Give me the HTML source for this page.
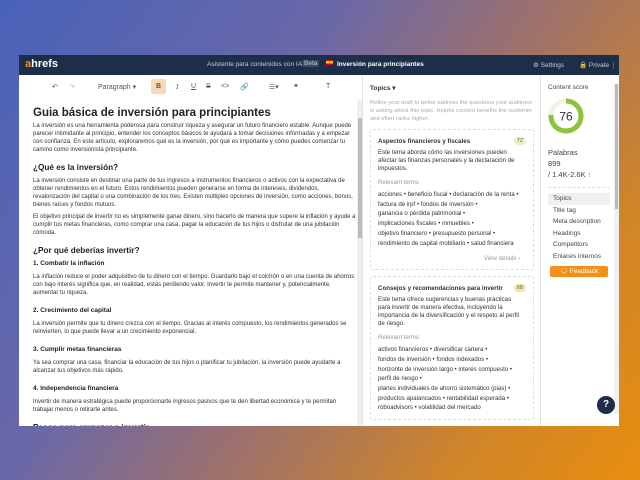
<!DOCTYPE html>
<html><head><meta charset="utf-8"><style>
*{box-sizing:border-box;margin:0;padding:0}
body{width:640px;height:480px;overflow:hidden;font-family:"Liberation Sans",sans-serif;background:linear-gradient(125deg,#4862b8 0%,#6a68a8 35%,#9a7070 55%,#d08528 80%,#e88e10 100%);position:relative}
.win{position:absolute;left:19px;top:55px;width:600px;height:371px;background:#fff;overflow:hidden}
.hdr{height:20px;background:#1c2e48;color:#c5ccd6;font-size:6.5px;position:relative}
.hdr span{position:absolute;top:6px}
.logo{left:6px;top:3px!important;font-size:11px;font-weight:bold;color:#fff}
.logo b{color:#f28c1e}
.tb{position:absolute;left:0;top:20px;width:338px;height:24px;font-size:7px;color:#555}
.tb span{position:absolute;top:8px}
.ed{position:absolute;left:14px;top:51px;width:324px;color:#333;font-size:6px;line-height:8px}
.ed h1{font-size:11.5px;line-height:14px;color:#222;margin-bottom:2px}
.ed h2{font-size:8.2px;line-height:10px;color:#222;margin:9px 0 4px}
.ed h3{font-size:6.5px;line-height:8px;color:#222;margin:10px 0 5px}
.ed h2+h3{margin-top:4px}
.ed p{margin-bottom:4px}
.sb1{position:absolute;left:338px;top:45px;width:6px;height:326px;background:#f0f0f0}
.sb1 i{position:absolute;left:1px;top:18px;width:4px;height:120px;background:#bbb}
.vl{position:absolute;left:343px;top:20px;width:1px;height:351px;background:#e2e2e2}
.tp{position:absolute;left:351px;top:20px;width:164px;font-size:5.8px;color:#333}
.card{border:1px dashed #ddd;border-radius:3px;padding:8px 13px 6px 7px;margin-top:6px;line-height:8px;position:relative;font-size:6.1px}
.card h4{font-size:6.2px;margin-bottom:3px}
.badge{position:absolute;right:7px;top:7px;background:#e9efc8;border-radius:5px;padding:0 3px;font-size:5.5px;color:#666}
.rt{color:#999;margin:6px 0 3px}
.rp{position:absolute;left:521px;top:20px;width:79px;height:351px;border-left:1px solid #e2e2e2;font-size:6.5px;color:#444}
.nav div{padding:2px 5px;height:11.5px;white-space:nowrap}
</style></head><body>
<div class="win">
 <div class="hdr">
  <span class="logo"><b>a</b>hrefs</span>
  <span style="left:188px">Asistente para contenidos con IA</span>
  <span style="left:283px;background:#3a4a60;padding:0 2px;border-radius:2px;top:5px">Beta</span>
  <span style="left:307px;top:5px;width:7px;height:5px;background:linear-gradient(#c60b1e 25%,#ffc400 25%,#ffc400 75%,#c60b1e 75%)"></span>
  <span style="left:318px;color:#fff;font-weight:bold">Inversión para principiantes</span>
  <span style="left:514px">⚙ Settings</span>
  <span style="left:560px">🔒 Private</span>
  <span style="left:591px">⋮</span>
 </div>
 <div class="tb">
  <span style="left:33px">↶</span><span style="left:50px;color:#bbb">↷</span>
  <span style="left:79px">Paragraph ▾</span>
  <span style="left:132px;top:4px;width:15px;height:15px;background:#fbd9b5;border-radius:2px"></span>
  <span style="left:137px;font-weight:bold">B</span>
  <span style="left:157px;font-style:italic;font-family:'Liberation Serif'">I</span>
  <span style="left:172px;text-decoration:underline">U</span>
  <span style="left:187px;text-decoration:line-through">S</span>
  <span style="left:202px">&lt;&gt;</span><span style="left:221px">🔗</span>
  <span style="left:250px">☰▾</span><span style="left:275px;font-weight:bold">❝</span><span style="left:307px">T</span>
 </div>
 <div class="ed">
  <h1>Guia básica de inversión para principiantes</h1>
  <p>La inversión es una herramienta poderosa para construir riqueza y asegurar un futuro financiero estable. Aunque puede parecer intimidante al principio, entender los conceptos básicos te ayudará a tomar decisiones informadas y a empezar con confianza. En este artículo, exploraremos qué es la inversión, por qué es importante y cómo puedes comenzar tu camino como inversionista principiante.</p>
  <h2>¿Qué es la inversión?</h2>
  <p>La inversión consiste en destinar una parte de tus ingresos a instrumentos financieros o activos con la expectativa de obtener rendimientos en el futuro. Estos rendimientos pueden generarse en forma de intereses, dividendos, revalorización del capital o una combinación de los tres. Existen múltiples opciones de inversión, como acciones, bonos, bienes raíces y fondos mutuos.</p>
  <p>El objetivo principal de invertir no es simplemente ganar dinero, sino hacerlo de manera que supere la inflación y ayude a cumplir tus metas financieras, como comprar una casa, pagar la educación de tus hijos o disfrutar de una jubilación cómoda.</p>
  <h2>¿Por qué deberías invertir?</h2>
  <h3>1. Combatir la inflación</h3>
  <p>La inflación reduce el poder adquisitivo de tu dinero con el tiempo. Guardarlo bajo el colchón o en una cuenta de ahorros con bajo interés significa que, en realidad, estás perdiendo valor. Invertir te permite mantener y, potencialmente, aumentar tu riqueza.</p>
  <h3>2. Crecimiento del capital</h3>
  <p>La inversión permite que tu dinero crezca con el tiempo. Gracias al interés compuesto, los rendimientos generados se reinvierten, lo que puede llevar a un crecimiento exponencial.</p>
  <h3>3. Cumplir metas financieras</h3>
  <p>Ya sea comprar una casa, financiar la educación de tus hijos o planificar tu jubilación, la inversión puede ayudarte a alcanzar tus objetivos más rápido.</p>
  <h3>4. Independencia financiera</h3>
  <p>Invertir de manera estratégica puede proporcionarte ingresos pasivos que te den libertad económica y te permitan trabajar menos o retirarte antes.</p>
  <h2>Pasos para empezar a invertir</h2>
 </div>
 <div class="sb1"><i></i></div>
 <div class="vl"></div>
 <div class="tp">
  <div style="font-weight:bold;font-size:6.5px;margin-top:9px">Topics ▾</div>
  <div style="color:#aaa;line-height:8px;margin-top:7px">Refine your draft to better address the questions your audience is asking about this topic. Helpful content benefits the customer and often ranks higher.</div>
  <div class="card"><h4>Aspectos financieros y fiscales</h4><span class="badge">72</span>
   Este tema aborda cómo las inversiones pueden afectar las finanzas personales y la declaración de impuestos.
   <div class="rt">Relevant terms</div>
   <div style="line-height:9.7px">acciones • beneficio fiscal • declaración de la renta •<br>factura de irpf • fondos de inversión •<br>ganancia o pérdida patrimonial •<br>implicaciones fiscales • inmuebles •<br>objetivo financiero • presupuesto personal •<br>rendimiento de capital mobiliario • salud financiera</div>
   <div style="text-align:right;color:#999;margin-top:7px">View details ›</div>
  </div>
  <div class="card"><h4>Consejos y recomendaciones para invertir</h4><span class="badge" style="background:#eee7a8">68</span>
   Este tema ofrece sugerencias y buenas prácticas para invertir de manera efectiva, incluyendo la importancia de la diversificación y el respeto al perfil de riesgo.
   <div class="rt">Relevant terms</div>
   <div style="line-height:9.7px">activos financieros • diversificar cartera •<br>fondos de inversión • fondos indexados •<br>horizonte de inversión largo • interés compuesto •<br>perfil de riesgo •<br>planes individuales de ahorro sistemático (pias) •<br>productos apalancados • rentabilidad esperada •<br>roboadvisors • volatilidad del mercado</div>
  </div>
 </div>
 <div class="rp">
  <div style="margin:9px 0 0 7px">Content score</div>
  <svg style="position:absolute;left:7px;top:23px" width="36" height="36" viewBox="0 0 36 36"><circle cx="18" cy="18" r="15" fill="none" stroke="#f0f2e6" stroke-width="5"/><circle cx="18" cy="18" r="15" fill="none" stroke="#8cc43c" stroke-width="5" stroke-dasharray="71.6 94.2" transform="rotate(-90 18 18)"/><text x="18" y="22.5" font-size="12" text-anchor="middle" fill="#333" font-family="Liberation Sans">76</text></svg>
  <div style="position:absolute;left:7px;top:72px;line-height:11px;font-size:7.5px">Palabras<br>899<br>/ 1.4K-2.6K <span style="color:#e44">↑</span></div>
  <div class="nav" style="position:absolute;left:7px;top:112px;width:62px;border-top:1px dashed #ddd;padding-top:5px">
   <div style="background:#f0f0f0">Topics</div><div>Title tag</div><div>Meta description</div><div>Headings</div><div>Competitors</div><div>Enlaces internos</div>
  </div>
  <div style="position:absolute;left:9px;top:191px;width:58px;height:11px;background:#f39018;color:#fff;text-align:center;line-height:11px;border-radius:2px">🗨 Feedback</div>
  <div style="position:absolute;right:0;top:9px;width:5px;height:330px;background:#f0f0f0"><i style="position:absolute;left:1px;top:0;width:3px;height:125px;background:#bbb"></i></div>
  <div style="position:absolute;left:56px;top:321px;width:18px;height:18px;border-radius:50%;background:#1c2e48;color:#fff;font-weight:bold;text-align:center;line-height:18px;font-size:10px">?</div>
 </div>
</div>
</body></html>
